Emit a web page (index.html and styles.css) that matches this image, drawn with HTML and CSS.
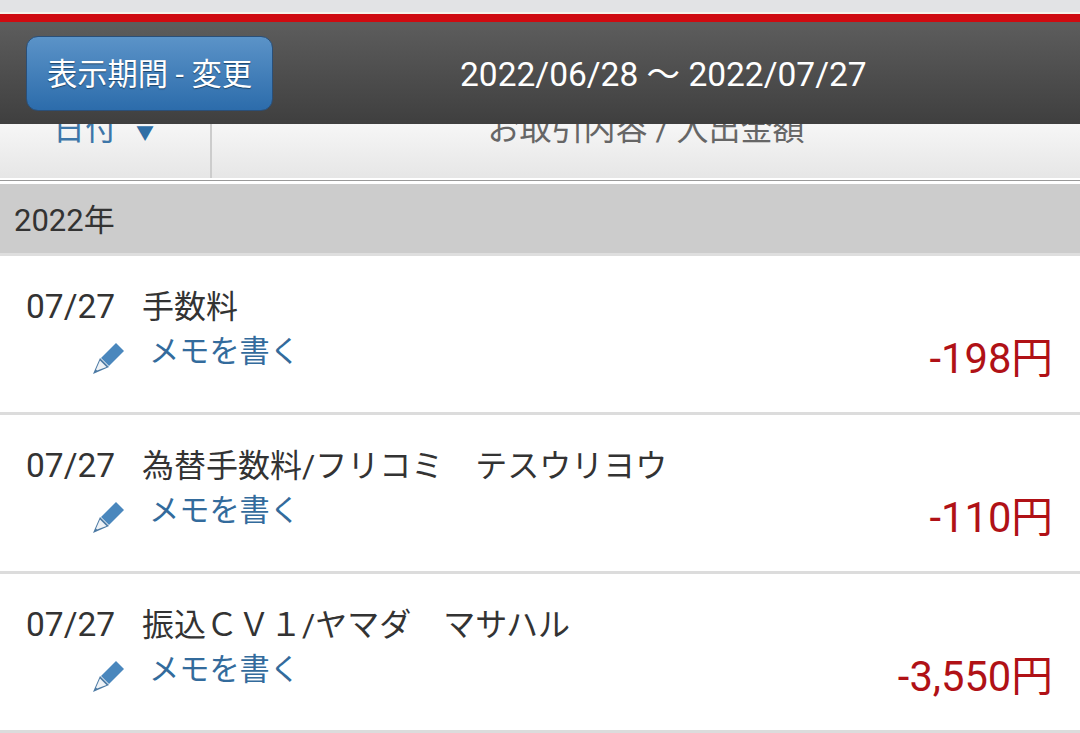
FILE: index.html
```html
<!DOCTYPE html>
<html lang="ja">
<head>
  <meta charset="UTF-8">
  <title>入出金明細</title>
  <meta name="viewport" content="width=device-width, initial-scale=1.0">
  <link rel="stylesheet" href="styles.css">
</head>
<body>
  <div class="top-strip"></div>
  <header class="period-bar">
    <a class="period-btn">表示期間 - 変更</a>
    <div class="period-text">2022/06/28 〜 2022/07/27</div>
  </header>
  <div class="table-head">
    <div class="head-date">日付<span class="arrow">▼</span></div>
    <div class="head-detail">お取引内容 / 入出金額</div>
  </div>
  <div class="year-bar">2022年</div>
  <ul class="rows">
    <li class="row">
      <div class="row-main">
        <div class="row-title"><span class="row-date">07/27</span><span>手数料</span></div>
        <a class="memo">
          <svg class="pencil" viewBox="0 0 32 32"><path class="pencil-tip" d="M8 16 L17 25 L1 32 Z"/><path class="pencil-body" d="M9 16 L24 1 L32 9 L17 24 Z"/><path class="pencil-wood" d="M8 18.500 L14.500 25 L5 28.500 L4 27.500 Z"/></svg>
          <span>メモを書く</span>
        </a>
      </div>
      <div class="amount">-198円</div>
    </li>
    <li class="row">
      <div class="row-main">
        <div class="row-title"><span class="row-date">07/27</span><span>為替手数料/フリコミ　テスウリヨウ</span></div>
        <a class="memo">
          <svg class="pencil" viewBox="0 0 32 32"><path class="pencil-tip" d="M8 16 L17 25 L1 32 Z"/><path class="pencil-body" d="M9 16 L24 1 L32 9 L17 24 Z"/><path class="pencil-wood" d="M8 18.500 L14.500 25 L5 28.500 L4 27.500 Z"/></svg>
          <span>メモを書く</span>
        </a>
      </div>
      <div class="amount">-110円</div>
    </li>
    <li class="row">
      <div class="row-main">
        <div class="row-title"><span class="row-date">07/27</span><span>振込ＣＶ１/ヤマダ　マサハル</span></div>
        <a class="memo">
          <svg class="pencil" viewBox="0 0 32 32"><path class="pencil-tip" d="M8 16 L17 25 L1 32 Z"/><path class="pencil-body" d="M9 16 L24 1 L32 9 L17 24 Z"/><path class="pencil-wood" d="M8 18.500 L14.500 25 L5 28.500 L4 27.500 Z"/></svg>
          <span>メモを書く</span>
        </a>
      </div>
      <div class="amount">-3,550円</div>
    </li>
  </ul>
</body>
</html>
```

FILE: styles.css
```css
* { margin: 0; padding: 0; box-sizing: border-box; }
html, body { height: 733px; overflow: hidden; }
body {
  background: #fff;
  color: #333;
  font-family: Roboto, "Noto Sans CJK JP", sans-serif;
  font-size: 30px;
  position: relative;
}
ul { list-style: none; }

.top-strip {
  height: 124px;
  background: #e2e3e5;
}

.period-bar {
  position: absolute;
  top: 12px;
  left: 0;
  right: 0;
  height: 112px;
  border-top: 2px solid #f4f2ea;
  background: linear-gradient(#5c5c5c 10%, #3f3f3f);
  display: flex;
  align-items: center;
  padding: 0 0 0 26px;
}
.period-bar::before {
  content: "";
  position: absolute;
  top: 0;
  left: 0;
  right: 0;
  height: 8px;
  background: #cf0a10;
}
.period-btn {
  width: 247px;
  height: 75px;
  margin-top: 8px;
  border: 1px solid #2a4f78;
  border-radius: 12px;
  background: linear-gradient(#5b93c8, #2c6cab);
  color: #fff;
  font-size: 30.300px;
  text-align: center;
  line-height: 75px;
  text-shadow: 0 1px 1px #1d4468;
  white-space: nowrap;
}
.period-text {
  flex: 1;
  margin: 4px 0 0 187px;
  color: #fff;
  font-size: 33.500px;
  white-space: nowrap;
}

.table-head {
  display: flex;
  height: 56px;
  background: linear-gradient(#f6f6f6, #e6e6e6);
  border-bottom: 2px solid #fff;
  overflow: hidden;
}
.head-date {
  width: 212px;
  border-right: 2px solid #ccc;
  color: #3d76a8;
  font-size: 32px;
  line-height: 10px;
  padding-left: 53px;
  white-space: nowrap;
}
.arrow { font-size: 18px; color: #2f6ea5; margin-left: 19px; }
.head-detail {
  flex: 1;
  color: #666;
  font-size: 32px;
  text-align: center;
  line-height: 10px;
}

.year-bar {
  height: 76px;
  border-top: 1px solid #999;
  border-bottom: 3px solid #dedede;
  box-shadow: inset 0 3px 0 #fff;
  background: #ccc;
  padding: 20px 14px 0;
  font-size: 31px;
  line-height: 40px;
  color: #333;
}

.row {
  height: 159px;
  border-bottom: 3px solid #dcdcdc;
  display: flex;
  justify-content: space-between;
  padding: 28px 27px 0 26px;
}
.row-title {
  display: flex;
  font-size: 32px;
  line-height: 46px;
  white-space: nowrap;
}
.row-date {
  width: 116px;
  font-size: 33.500px;
}
.memo {
  display: flex;
  align-items: center;
  margin-left: 66px;
  color: #336b9c;
  font-size: 30.200px;
  line-height: 44px;
}
.pencil {
  width: 32px;
  height: 32px;
  margin: 12px 25px 0 0;
}
.pencil-body { fill: #4a87bd; }
.pencil-tip { fill: #4b79a3; }
.pencil-wood { fill: #eef2f6; }
.amount {
  align-self: flex-start;
  margin-top: 47px;
  color: #b01116;
  font-size: 41.700px;
  line-height: 56px;
  white-space: nowrap;
}
```
